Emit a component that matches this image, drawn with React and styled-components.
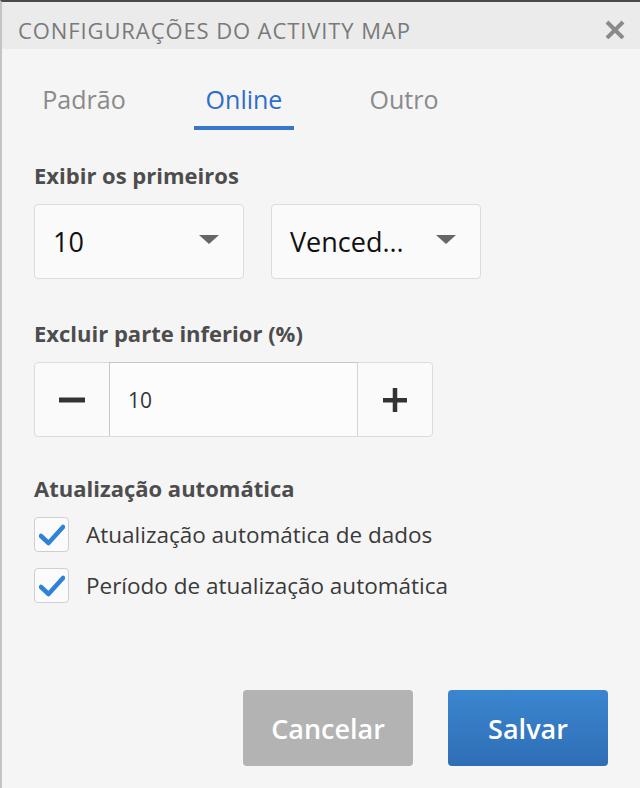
import React, { useState } from 'react';
import styled, { createGlobalStyle } from 'styled-components';

const GlobalStyle = createGlobalStyle`
  html, body {
    margin: 0;
    padding: 0;
    background: #f5f5f5;
  }
  * { box-sizing: border-box; }
`;

const font = `"Open Sans", "Noto Sans", sans-serif`;

const Dialog = styled.div`
  width: 640px;
  height: 788px;
  display: flex;
  flex-direction: column;
  background: #f5f5f5;
  border-top: 2px solid #4a4a4a;
  border-left: 2px solid #c4c4c4;
  font-family: ${font};
  overflow: hidden;
`;

const Header = styled.div`
  height: 47px;
  flex-shrink: 0;
  display: flex;
  align-items: flex-start;
  justify-content: space-between;
  padding: 17px 15px 0 16px;
  background: #ebebeb;
  h1 {
    margin: 0;
    font-size: 22px;
    line-height: 22px;
    letter-spacing: 0.9px;
    font-weight: 400;
    color: #7a7a7a;
  }
`;

const CloseButton = styled.button`
  border: 0;
  background: none;
  padding: 0;
  cursor: pointer;
  svg { display: block; }
`;

const Body = styled.div`
  flex: 1;
  display: flex;
  flex-direction: column;
  padding: 0 32px 22px 32px;
`;

const Tabs = styled.div`
  display: flex;
  gap: 60px;
  margin-top: 35px;
`;

const Tab = styled.button`
  width: 100px;
  border: 0;
  background: none;
  font-family: ${font};
  font-size: 25px;
  line-height: 30px;
  padding: 0 0 12px;
  text-align: center;
  color: ${({ $active }) => ($active ? '#2e6dca' : '#8a8a8a')};
  border-bottom: 4px solid ${({ $active }) => ($active ? '#3b74cc' : 'transparent')};
  cursor: pointer;
`;

const Section = styled.div`
  display: flex;
  flex-direction: column;
  margin-top: ${({ $top }) => $top}px;
`;

const Label = styled.div`
  font-size: 22px;
  line-height: 26px;
  font-weight: 700;
  color: #4d4d4d;
  margin-bottom: 16px;
`;

const SelectRow = styled.div`
  display: flex;
  gap: 27px;
`;

const Select = styled.div`
  width: 210px;
  height: 75px;
  display: flex;
  align-items: center;
  justify-content: space-between;
  padding: 0 24px 0 18px;
  background: #fafafa;
  border: 1px solid #dcdcdc;
  border-radius: 4px;
  font-size: 27px;
  color: #111;
`;

const Caret = styled.span`
  width: 0;
  height: 0;
  border-left: 10px solid transparent;
  border-right: 10px solid transparent;
  border-top: 9px solid #666;
  margin-top: -4px;
`;

const Stepper = styled.div`
  width: 399px;
  height: 75px;
  display: flex;
  border: 1px solid #dcdcdc;
  border-radius: 4px;
  background: #fafafa;
`;

const StepButton = styled.button`
  width: 74px;
  border: 0;
  background: none;
  display: flex;
  align-items: center;
  justify-content: center;
  cursor: pointer;
  padding: 0;
  svg { display: block; }
`;

const StepInput = styled.div`
  flex: 1;
  display: flex;
  align-items: center;
  padding-left: 18px;
  border-left: 1px solid #c9c9c9;
  border-right: 1px solid #d4d4d4;
  border-top: 1px solid #c6c6c6;
  margin-top: -1px;
  background: #fcfcfc;
  font-size: 21px;
  color: #333;
`;

const CheckList = styled.div`
  display: flex;
  flex-direction: column;
  gap: 16px;
`;

const CheckRow = styled.label`
  display: flex;
  align-items: center;
  gap: 17px;
  font-size: 22.5px;
  color: #3a3a3a;
  cursor: pointer;
`;

const Box = styled.span`
  width: 35px;
  height: 35px;
  border: 1px solid #cfcfcf;
  border-radius: 4px;
  background: #fbfbfb;
  display: flex;
  align-items: center;
  justify-content: center;
  svg { display: block; }
`;

const Footer = styled.div`
  margin-top: auto;
  display: flex;
  justify-content: flex-end;
  gap: 35px;
`;

const Button = styled.button`
  height: 76px;
  width: ${({ $w }) => $w}px;
  border: 0;
  border-radius: 4px;
  font-family: ${font};
  font-size: 27px;
  font-weight: 600;
  color: #fff;
  background: ${({ $primary }) =>
    $primary ? 'linear-gradient(#3a86d0, #2f6eb6)' : '#b3b3b3'};
  cursor: pointer;
`;

const Check = () => (
  <svg width="26" height="22" viewBox="0 0 26 22">
    <path d="M2 12 L9.5 19 L24 3" fill="none" stroke="#2f82d6" strokeWidth="4.5" strokeLinecap="round" strokeLinejoin="round" />
  </svg>
);

export default function App() {
  const [tab, setTab] = useState('Online');
  const [value, setValue] = useState(10);
  const [checks, setChecks] = useState([true, true]);
  const tabs = ['Padrão', 'Online', 'Outro'];
  const options = ['Atualização automática de dados', 'Período de atualização automática'];

  return (
    <>
      <GlobalStyle />
      <Dialog>
        <Header>
          <h1>CONFIGURAÇÕES DO ACTIVITY MAP</h1>
          <CloseButton aria-label="Fechar">
            <svg width="20" height="20" viewBox="0 0 20 20">
              <path d="M2 3 L18 19 M18 3 L2 19" stroke="#8a8a8a" strokeWidth="4" />
            </svg>
          </CloseButton>
        </Header>
        <Body>
          <Tabs>
            {tabs.map((t) => (
              <Tab key={t} $active={tab === t} onClick={() => setTab(t)}>
                {t}
              </Tab>
            ))}
          </Tabs>

          <Section $top={32}>
            <Label>Exibir os primeiros</Label>
            <SelectRow>
              <Select>
                <span>10</span>
                <Caret />
              </Select>
              <Select>
                <span>Venced...</span>
                <Caret />
              </Select>
            </SelectRow>
          </Section>

          <Section $top={41}>
            <Label>Excluir parte inferior (%)</Label>
            <Stepper>
              <StepButton onClick={() => setValue(value - 1)} aria-label="Diminuir">
                <svg width="26" height="6" viewBox="0 0 26 6">
                  <rect width="26" height="5" y="0.5" fill="#333" />
                </svg>
              </StepButton>
              <StepInput>{value}</StepInput>
              <StepButton onClick={() => setValue(value + 1)} aria-label="Aumentar">
                <svg width="24" height="24" viewBox="0 0 24 24">
                  <rect x="0" y="10" width="24" height="4.5" fill="#333" />
                  <rect x="9.75" y="0" width="4.5" height="24" fill="#333" />
                </svg>
              </StepButton>
            </Stepper>
          </Section>

          <Section $top={38}>
            <Label>Atualização automática</Label>
            <CheckList>
              {options.map((o, i) => (
                <CheckRow
                  key={o}
                  onClick={() => setChecks(checks.map((c, j) => (j === i ? !c : c)))}
                >
                  <Box>{checks[i] && <Check />}</Box>
                  {o}
                </CheckRow>
              ))}
            </CheckList>
          </Section>

          <Footer>
            <Button $w={170}>Cancelar</Button>
            <Button $w={160} $primary>Salvar</Button>
          </Footer>
        </Body>
      </Dialog>
    </>
  );
}
